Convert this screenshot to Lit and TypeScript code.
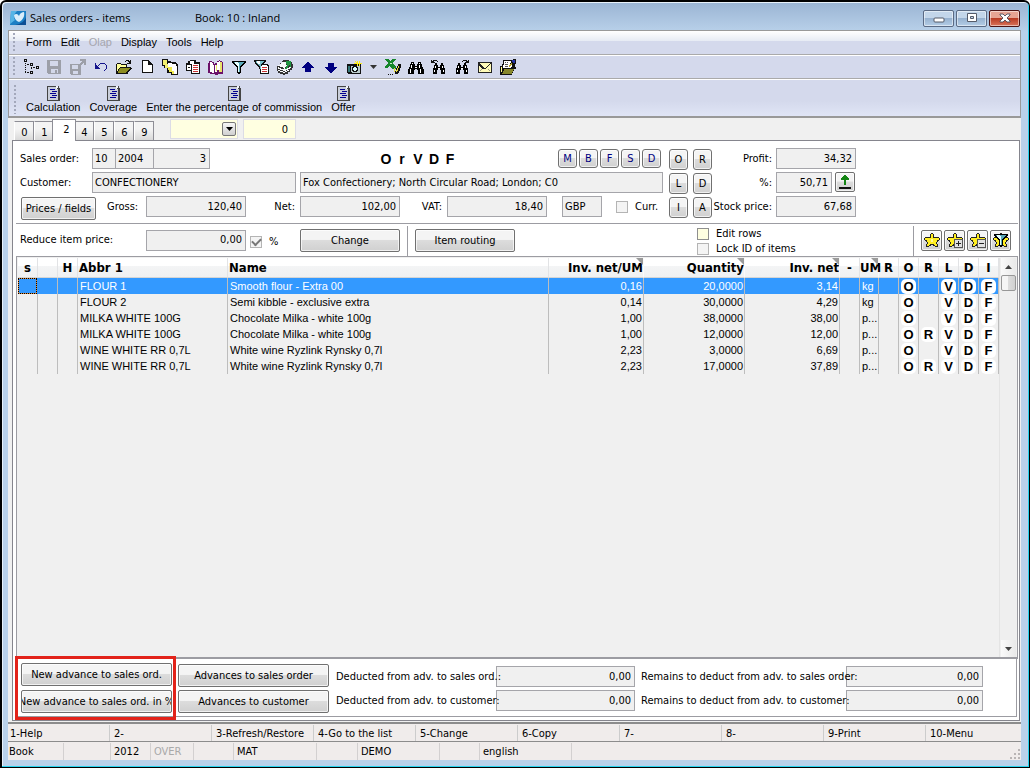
import { LitElement, html, css, svg, nothing } from "lit";
import { customElement, property, state } from "lit/decorators.js";
import { classMap } from "lit/directives/class-map.js";

/* 16x16 glyphs, drawn on whole pixels */
const BINOCULARS = svg`
  <path d="M3 3h3v2h-3zM10 3h3v2h-3zM2 5h5v2h2v-2h5v3h1v2h1v5h-6v-4h-1v-1h-2v1h-1v4h-6v-5h1v-2h1z" fill="#000"/>
  <path d="M4 4h1v1h-1zM11 4h1v1h-1zM3 6h1v3h-1zM11 6h1v3h-1zM2 10h1v4h-1zM12 10h1v4h-1zM7 8h2v1h-2z" fill="#fff"/>`;
const SMALL_BINOCULARS = svg`
  <path d="M4 4h2v2h-2zM10 4h2v2h-2zM3 6h4v2h2v-2h4v3h1v6h-4v-4h-1v-1h-2v1h-1v4h-4v-6h1z" fill="#000"/>
  <path d="M4 7h1v2h-1zM11 7h1v2h-1zM3 11h1v2h-1zM12 11h1v2h-1zM7 9h2v1h-2z" fill="#fff"/>`;
const STAR = svg`
  <path d="M7 1h2v1h1v3h5v1h1v2h-1v1h-1v1h-1v2h1v3h-3v-1h-2v-1h-2v1h-2v1h-3v-3h1v-2h-1v-1h-1v-1h-1v-2h1v-1h5v-3h1z" fill="#222"/>
  <path d="M7 2h2v4h6v2h-2v2h-1v2h1v2h-2v-1h-1v-1h-4v1h-1v1h-2v-2h1v-2h-1v-2h-2v-2h6z" fill="#ffee22"/>
  <path d="M7 7h2v3h-2z" fill="#fff799"/>`;
const FUNNEL = svg`
  <path d="M1 2h14v2h-1v1h-1v1h-1v1h-1v1h-1v6h-1v1h-2v-1h-1v-6h-1v-1h-1v-1h-1v-1h-1v-1h-1z" fill="#000"/>
  <path d="M3 3h10v1h-1v1h-1v1h-1v1h-1v6h-2v-6h-1v-1h-1v-1h-1v-1h-1z" fill="#5aa9b9"/>
  <path d="M4 3h3v1h1v9h-1v-6h-1v-1h-1v-1h-1z" fill="#e8ffff"/>`;

const GLYPHS: Record<string, unknown> = {
  tree: svg`<path fill-rule="evenodd" d="M0 0h3v3h-3zM1 1h1v1h-1zM6 4h3v3h-3zM7 5h1v1h-1zM12 7h3v3h-3zM13 8h1v1h-1zM6 12h3v3h-3zM7 13h1v1h-1zM1 4h1v1h-1zM1 6h1v1h-1zM1 8h1v1h-1zM1 10h1v1h-1zM1 12h1v2h-1zM3 13h2v1h-2zM3 5h2v1h-2zM7 8h1v2h-1zM9 8h2v1h-2z" fill="#111"/>`,
  save: svg`<path d="M0 1h14v14h-13v-1h-1z" fill="#9c9fa8"/><path d="M3 2h8v5h-8zM4 10h7v4h-7z" fill="#d3d8ea"/><path d="M8 11h2v3h-2z" fill="#9c9fa8"/>`,
  export: svg`<path d="M0 5h11v11h-10v-1h-1z" fill="#9c9fa8"/><path d="M2 6h6v4h-6zM3 12h5v3h-5z" fill="#d3d8ea"/><path d="M10 0h6v6h-2v-2h-1v1h-1v1h-1v1h-1v1h-2v-2h1v-1h1v-1h1v-1h1v-1h-2z" fill="#9c9fa8"/>`,
  undo: svg`<path d="M2 4h1v2h1v1h1v-1h1v-1h1v-1h5v1h1v1h1v4h-1v1h-1v1h-1v-1h1v-1h1v-4h-1v-1h-5v1h-1v1h-1v1h1v1h1v1h-5z" fill="#14148c"/>`,
  open: svg`<path d="M0 5h1v-1h4v1h6v3h4v1h1v1h-1v1h-1v1h-1v1h-1v2h-12z" fill="#111"/><path d="M1 5h4v1h5v2h-6v1h-1v1h-1v2h-1z" fill="#ffff99"/><path d="M4 9h10v1h-1v1h-1v1h-1v1h-1v1h-8v-2h1v-2h1z" fill="#8c8c20"/><path d="M9 2h1v-1h3v1h1v-1h1v4h-4v-1h2v-1h-1v-1h-2v1h-1z" fill="#111"/>`,
  page: svg`<path d="M3 1h7v1h1v1h1v1h1v1h1v9h-11z" fill="#111"/><path d="M4 2h5v4h4v7h-9z" fill="#fff"/>`,
  copies: svg`<path d="M0 0h6v2h3v1h5v1h1v1h1v11h-7v-2h-4v-5h-3v-2h-2z" fill="#111"/><path d="M1 1h4v5h-4zM3 5h4v4h-4z" fill="#f4f16e"/><path d="M6 4h4v6h-4zM10 5h4v2h1v8h-5z" fill="#fff"/><path d="M6 8h4v5h-3v-2h-1zM10 12h2v3h-2z" fill="#efe94c"/>`,
  locked: svg`<path d="M5 1h6v2h4v12h-9v-3h-5v-8h2v-2h2z" fill="#111"/><path d="M2 6h4v5h-4zM5 2h4v3h-4z" fill="#fff"/><path d="M7 5h7v9h-7z" fill="#fff"/><path d="M8 6h5v1h-5zM8 8h5v1h-5zM8 10h5v1h-5zM8 12h5v1h-5z" fill="#c33"/><path d="M3 8h2v1h-2z" fill="#111"/>`,
  book: svg`<path d="M0 4h1v-2h3v1h2v2h1v-1h2v-2h2v-1h1v1h2v1h1v12h-5v1h-3v-1h-5v-1h-2z" fill="#6b1168"/><path d="M2 3h2v1h1v2h1v8h-2v-1h-2z" fill="#fff"/><path d="M7 6h2v-3h2v-1h1v9h-3v2h-2z" fill="#fff"/><path d="M12 3h2v10h-3v-2h1zM8 6h1v6h-1z" fill="#e8e36a"/>`,
  filter: FUNNEL,
  filterDoc: svg`<path d="M0 1h12v2h-1v1h-1v1h4v1h1v9h-9v-5h-1v-2h-1v-1h-1v-1h-1v-1h-1v-2h-1z" fill="#111"/><path d="M2 2h8v1h-1v1h-1v1h-1v5h-1v-3h-1v-1h-1v-1h-1v-1h-1z" fill="#75bdca"/><path d="M3 2h3v3h-2v-1h-1z" fill="#fff"/><path d="M8 6h5v1h1v7h-7v-7h1z" fill="#fff"/><path d="M8 8h5v1h-5zM8 10h5v1h-5zM8 12h5v1h-5z" fill="#c33"/>`,
  books: svg`<path d="M6 1h6v1h2v1h1v2h1v4h-1v2h-2v2h-2v2h-3v1h-2v-1h-3v-1h-2v-2h-1v-5h1v-1h2v-2h2v-2h1z" fill="#333"/><path d="M5 3h4v3h1v2h-2v1h-2v-1h-3v-1h-2v-1h2v-1h1v-1h1zM1 8h1v1h2v1h3v-1h2v-1h1v1h2v-1h2v1h-1v1h-2v1h-2v1h-3v-1h-3v-1h-2zM1 11h2v1h3v1h2v-1h2v-1h2v1h-2v1h-2v1h-2v-1h-3v-1h-2z" fill="#f6f8fa"/><path d="M9 2h5v6h-1v-2h-1v1h-1v2h-1v1h-2v-1h1v-2h1v-2h-1z" fill="#1e9440"/>`,
  up: svg`<path d="M7 3h2v1h1v1h1v1h1v1h1v1h1v1h-3v4h-6v-4h-3v-1h1v-1h1v-1h1v-1h1v-1h1z" fill="#000080"/>`,
  down: svg`<path d="M5 4h6v4h3v1h-1v1h-1v1h-1v1h-1v1h-1v1h-2v-1h-1v-1h-1v-1h-1v-1h-1v-1h-1v-1h3z" fill="#000080"/>`,
  camera: svg`<path d="M1 5h14v10h-13v-1h-1z" fill="#111"/><path d="M2 7h2v6h-2z" fill="#377"/><path d="M5 7h9v7h-8v-1h-1z" fill="#bcc"/><path d="M7 7h4v1h1v4h-1v1h-4v-1h-1v-4h1z" fill="#111"/><path d="M8 8h2v1h1v2h-1v1h-2v-1h-1v-2h1z" fill="#dff"/><path d="M8 2h2v1h1v-1h1v2h1v-2h1v2h2v1h-2v2h-1v-2h-1v2h-1v-2h-3v-1h2v-1h-1z" fill="#ffee18"/>`,
  excel: svg`<path d="M0 0h4v1h1v1h1v-1h1v-1h4v1h-1v1h-1v1h-1v2h1v1h1v1h1v3h-4v-1h-1v-1h-1v-1h-1v1h-1v1h-3v-2h1v-1h1v-1h1v-2h-1v-1h-1v-1h-1z" fill="#15862b"/><path d="M5 4h2v1h-2z" fill="#c7e8c9"/><path d="M13 5h3v4h-1v3h-1v2h-1v1h-3v-3h1v-3h1v-2h1z" fill="#111"/><path d="M13 7h1v2h-1v3h-1v1h-1v-2h1v-2h1zM9 9h1v4h-1z" fill="#e4d93b"/><path d="M3 15h1v1h-1zM5 15h1v1h-1zM7 15h1v1h-1z" fill="#111"/>`,
  find: BINOCULARS,
  findPrev: svg`${SMALL_BINOCULARS}<path d="M0 1h1v1h1v-1h4v1h1v1h-1v-1h-3v1h1v1h-4z" fill="#111"/>`,
  findNext: svg`${SMALL_BINOCULARS}<path d="M9 1h4v1h1v-1h1v3h-4v-1h1v-1h-3v1h-1v-1h1z" fill="#111"/>`,
  mail: svg`<path d="M1 3h14v11h-14z" fill="#222"/><path d="M2 4h12v9h-12z" fill="#fffbb8"/><path d="M2 4h1v1h1v1h1v1h1v1h1v1h2v-1h1v-1h1v-1h1v-1h1v-1h1v1h-1v1h-1v1h-1v1h-1v1h-1v1h-4v-1h-1v-1h-1v-1h-1v-1h-1v-1h-1z" fill="#222"/><path d="M3 11h1v-1h1v1h-1v1h-1zM11 10h1v1h1v1h-1v-1h-1z" fill="#998"/>`,
  folder: svg`<path d="M3 1h10v-1h3v5h-1v3h1v2h-2v2h-1v2h-1v2h-12v-9h2v-2h1z" fill="#111"/><path d="M4 2h7v2h-1v1h2v3h-1v1h-8v-3h1z" fill="#fff"/><path d="M5 3h1v1h-1zM7 3h1v1h-1zM5 5h3v1h-3zM5 7h3v1h-3z" fill="#555"/><path d="M12 1h3v3h-2v-1h-1z" fill="#2734a3"/><path d="M10 5h1v-1h1v2h-1v1h-1v1h-1v-2h1z" fill="#b9a72a"/><path d="M4 10h10v1h-1v2h-1v2h-10v-1h1v-2h1z" fill="#87872b"/><path d="M1 8h1v5h-1z" fill="#ffff8b"/>`,
  form: svg`<path d="M2 1h12v2h1v13h-13z" fill="#444"/><path d="M3 2h8v2h2v11h-10z" fill="#c9ced9"/><path d="M11 1h2v2h-1v1h-1z" fill="#f2f4fa"/><path d="M5 4h5v1h-5zM7 6h5v1h-5zM5 8h6v1h-6zM7 10h5v1h-5zM5 12h6v1h-6z" fill="#000090"/>`,
  star: STAR,
  starAdd: svg`${STAR}<path d="M7 7h9v9h-9z" fill="#555"/><path d="M8 8h7v7h-7z" fill="#e2e2e2"/><path d="M11 9h1v2h2v1h-2v2h-1v-2h-2v-1h2z" fill="#222"/>`,
  starRemove: svg`${STAR}<path d="M7 7h9v9h-9z" fill="#555"/><path d="M8 8h7v7h-7z" fill="#e2e2e2"/><path d="M9 11h5v1h-5z" fill="#222"/>`,
  starFilter: svg`${STAR}${FUNNEL}`,
  raise: svg`<path d="M7 1h2v1h1v1h1v1h1v2h-3v5h-2v-5h-3v-2h1v-1h1v-1h1z" fill="#148514"/><path d="M2 13h12v2h-12z" fill="#111"/>`,
};

@customElement("px-icon")
class PxIcon extends LitElement {
  static styles = css`
    :host { display: block; width: 16px; height: 16px; }
    .art { display: block; }
  `;
  @property() name = "";
  render() {
    return html`<svg class="art" width="16" height="16" viewBox="0 0 16 16" shape-rendering="crispEdges" aria-hidden="true">${GLYPHS[this.name] ?? nothing}</svg>`;
  }
}

interface Item {
  abbr: string;
  name: string;
  unitNet: string;
  qty: string;
  net: string;
  um: string;
  flags: string[];
}

const ITEMS: Item[] = [
  { abbr: "FLOUR 1", name: "Smooth flour - Extra 00", unitNet: "0,16", qty: "20,0000", net: "3,14", um: "kg", flags: ["O", "", "V", "D", "F"] },
  { abbr: "FLOUR 2", name: "Semi kibble - exclusive extra", unitNet: "0,14", qty: "30,0000", net: "4,29", um: "kg", flags: ["O", "", "V", "D", "F"] },
  { abbr: "MILKA WHITE 100G", name: "Chocolate Milka - white 100g", unitNet: "1,00", qty: "38,0000", net: "38,00", um: "p...", flags: ["O", "", "V", "D", "F"] },
  { abbr: "MILKA WHITE 100G", name: "Chocolate Milka - white 100g", unitNet: "1,00", qty: "12,0000", net: "12,00", um: "p...", flags: ["O", "R", "V", "D", "F"] },
  { abbr: "WINE WHITE RR 0,7L", name: "White wine Ryzlink Rynsky 0,7l", unitNet: "2,23", qty: "3,0000", net: "6,69", um: "p...", flags: ["O", "", "V", "D", "F"] },
  { abbr: "WINE WHITE RR 0,7L", name: "White wine Ryzlink Rynsky 0,7l", unitNet: "2,23", qty: "17,0000", net: "37,89", um: "p...", flags: ["O", "R", "V", "D", "F"] },
];

@customElement("app-root")
class AppRoot extends LitElement {
  static styles = css`
    :host {
      display: block;
      --ui: "DejaVu Sans Condensed", Roboto, "Liberation Sans", sans-serif;
      --sys: "Liberation Sans", Arial, sans-serif;
      --face: #f0f0f0;
      --line: #9c9ca2;
      font: 11px/14px var(--ui);
      color: #000;
    }
    * { box-sizing: border-box; }
    button, input, select { font: inherit; color: inherit; margin: 0; padding: 0; border-radius: 0; }
    label { white-space: nowrap; }

    .window {
      display: flex;
      flex-direction: column;
      min-height: 100vh;
      padding: 0 8px 7px 6px;
      border: solid #000;
      border-width: 2px 1px 1px 2px;
      border-radius: 6px 6px 0 0;
      background: linear-gradient(#9ab4d3, #b9d1ea 30px);
      box-shadow: inset -1px -1px #27d3ee, inset 1px 1px #e8f1fa;
    }

    .titlebar { display: flex; align-items: center; height: 28px; padding: 4px 0 0 2px; font: 11px/16px "Open Sans", sans-serif; }
    .logo { display: block; margin-right: 4px; }
    .caption { width: 165px; white-space: nowrap; }
    .book { flex: 1; white-space: nowrap; }
    .winbtns { display: flex; gap: 2px; margin: 0 1px 0 0; }
    .winbtn {
      display: grid; place-items: center; width: 31px; height: 17px;
      border: 1px solid #5a6a84; border-radius: 2px;
      background: linear-gradient(#c3d6ea 45%, #97b2d0 50%, #b4cde6);
      box-shadow: inset 0 0 0 1px #ffffff80;
    }
    .close { border-color: #4d1414; background: linear-gradient(#e6a493 45%, #b93c24 50%, #d9745a); }

    .bars {
      border: 1px solid #999; border-bottom: 2px solid #999;
      background: linear-gradient(#fff, #e6ebf4 10px, #d4d9ec 10px, #d4d9ec 70px, #e0e5f6);
    }
    .bar { display: flex; align-items: center; border-bottom: 1px solid #aaa; box-shadow: 0 1px #fff; padding-left: 4px; }
    .bar:last-child { border-bottom: 0; box-shadow: none; }
    .grip { width: 3px; align-self: stretch; margin: 2px 4px 2px 0; background: radial-gradient(circle at 1px 1px, #a3a8bb 1px, transparent 1px) 0 0 / 3px 4px; }
    .menubar { height: 24px; font-family: var(--sys); }
    .menu { border: 0; background: none; padding: 3px 4px 5px 5px; }
    .menu:first-of-type { padding-left: 6px; }
    .menu.off { color: #a6a6ae; }
    .toolbar { height: 24px; }
    .tool { display: grid; place-items: center; width: 23px; height: 20px; border: 0; background: none; }
    .drop { width: 16px; }
    .formbar { height: 37px; font-family: var(--sys); padding: 4px 0 0 5px; }
    .formbtn { display: grid; justify-items: center; border: 0; background: none; padding: 0 4px 0 5px; line-height: 13px; }

    .client { flex: 1; display: flex; flex-direction: column; background: var(--face); padding: 1px 1px 0 4px; }
    .tabs { display: flex; align-items: flex-end; height: 21px; padding-left: 2px; }
    .tab {
      width: 20px; height: 19px; border: 1px solid #8e8e96; border-bottom: 0; border-left-color: #fff;
      background: linear-gradient(#f4f4f4 40%, #d9d9d9); padding: 3px 0 0 1px;
    }
    .tab.on { width: 24px; height: 22px; background: #fff; border-left-color: #8e8e96; padding: 0 0 1px 5px; margin: 0 -2px -1px; position: relative; }
    .combo { position: relative; width: 68px; height: 20px; margin: 0 5px 0 16px; align-self: flex-start; }
    .pick { width: 100%; height: 100%; appearance: none; border: 1px solid #dcdce6; background: #ffffe1; }
    .arrow { position: absolute; right: 2px; top: 3px; width: 14px; height: 14px; display: grid; place-items: center; border: 1px solid #777; border-radius: 2px; background: linear-gradient(#f6f6f6, #d0d0d0); pointer-events: none; }
    .yellow { width: 53px; height: 20px; align-self: flex-start; border: 1px solid #dcdce6; background: #ffffe1; text-align: right; padding: 0 7px; }

    .panel { flex: 1; display: flex; flex-direction: column; border: 1px solid #85858d; background: #fff; padding: 0 1px 3px 3px; }

    .field { height: 21px; border: 1px solid #a5a5aa; background: var(--face); padding: 0 1px 1px 2px; min-width: 0; }
    .num { text-align: right; padding-right: 3px; }
    .push {
      height: 23px; overflow: hidden; display: flex; align-items: center; justify-content: center; white-space: nowrap;
      border: 1px solid #707070; border-radius: 2px; padding-top: 1px;
      background: linear-gradient(#f4f4f4 45%, #dcdcdc 50%, #d0d0d0);
      box-shadow: inset 0 0 0 1px #ffffffb0;
    }
    .key { width: 19px; height: 21px; border-radius: 3px; }
    .blue { height: 19px; color: #000080; }
    .check {
      appearance: none; width: 12px; height: 12px; flex: none; border: 1px solid #b4b4b4; background: #f4f4f4;
      display: grid; place-items: center;
    }
    .check:checked::after { content: ""; width: 7px; height: 4px; border: solid #777; border-width: 0 0 2px 2px; rotate: -45deg; translate: 0 -1px; }
    .hot { background: #ffffe1; border-color: #8f8f8f; }

    .head { display: flex; align-items: flex-start; padding: 7px 162px 5px 0; border-bottom: 1px solid var(--line); }
    .main { flex: 1; min-width: 0; display: grid; gap: 3px; padding-left: 4px; }
    .line { display: flex; align-items: center; height: 21px; }
    .lead { width: 72px; }
    .joined { margin-left: -1px; }
    .w24 { width: 24px; }
    .w39 { width: 39px; }
    .w57 { width: 57px; }
    .w100 { width: 100px; }
    .w80 { width: 80px; }
    .w56 { width: 56px; }
    .w40 { width: 40px; }
    .w204 { width: 204px; }
    .grow { flex: 1; margin-left: 4px; }
    .marks { display: flex; margin-left: 168px; font: bold 14px/16px var(--sys); }
    .mark { width: 16px; text-align: center; }
    .blues { display: flex; gap: 2px; margin-left: auto; padding-right: 2px; }
    .prices { width: 75px; margin: 4px 11px 0 1px; }
    .gross { width: 39px; }
    .net { width: 54px; padding-right: 5px; text-align: right; }
    .vat { width: 47px; padding-right: 5px; text-align: right; }
    .cur { margin: 0 14px 0 15px; }
    .curlabel { padding: 0 3px 0 7px; }
    .keys { display: grid; grid-template-columns: 19px 19px; gap: 3px 5px; padding: 1px 0 0 6px; }
    .sums { display: grid; grid-template-columns: 64px 80px; gap: 3px 0; align-items: center; text-align: right; }
    .sums label { padding-right: 4px; }
    .withbtn { display: flex; gap: 3px; }
    .raise { width: 20px; height: 20px; padding: 0; }

    .tools { display: flex; align-items: center; height: 32px; padding-left: 4px; }
    .reduce { width: 126px; }
    .pct { margin: 3px 7px 0 4px; }
    .pctlabel { padding-top: 4px; width: 31px; }
    .rule { align-self: stretch; width: 1px; margin: 2px 7px 0; background: var(--line); }
    .opts { margin: 2px 0 0 auto; display: grid; gap: 1px; width: 209px; font: 11px/14px var(--ui); }
    .opt { display: flex; align-items: center; gap: 7px; }
    .stars { display: flex; gap: 2px; padding: 0 7px 0 0; }
    .starbtn { width: 21px; height: 21px; padding: 0; }

    .listbox { flex: 1; display: flex; min-height: 120px; border: 1px solid var(--line); border-bottom-width: 2px; background: var(--face); padding: 1px 1px 0; }
    .listwrap { flex: 1; min-width: 0; }
    .grid { width: 100%; border-collapse: separate; border-spacing: 0; table-layout: fixed; font: 11px/16px var(--sys); }
    .grid th {
      position: relative; height: 20px; padding: 0 1px; text-align: left; white-space: nowrap; overflow: hidden;
      font: bold 13px/18px var(--ui); background: linear-gradient(#fff 40%, #f3f4f5 45%, #f0f1f2); border-right: 1px solid #e2e3e5; border-bottom: 1px solid #d5d5d5;
    }
    .grid th.mid { text-align: center; padding: 0; }
    .grid th.end { text-align: right; padding: 0; }
    .grid th.um { padding: 0; overflow: visible; z-index: 1; }
    .grid th.end, .grid th.um { border-right-color: #fafafa; }
    .corner::after { content: ""; position: absolute; right: 0; top: 0; border: solid transparent; border-width: 0 7px 7px 0; border-right-color: #9a9a9a; }
    .grid td { height: 16px; padding: 0 2px; white-space: nowrap; overflow: hidden; border-right: 1px solid #bdbdbd; }
    .grid td.end { text-align: right; padding-right: 1px; }
    .grid td.mid { padding: 0; }
    .sel { background: #3399ff; color: #fff; }
    .grid td.focus { padding: 0; border-right-color: #3399ff; }
    .ring { display: block; height: 16px; border: 1px dotted #000; background: linear-gradient(#3399ff, #3399ff) padding-box, #e58a35; }
    .dot { display: block; width: 15px; height: 15px; margin: 0 auto; border-radius: 5px; background: #fff; color: #000; text-align: center; font: bold 13px/15px var(--sys); }
    .c20 { width: 20px; }
    .c19 { width: 19px; }
    .c150 { width: 150px; }
    .c95 { width: 95px; }
    .c101 { width: 101px; }
    .scroll { width: 17px; display: flex; flex-direction: column; align-items: center; background: #efefef; border-left: 1px solid #e4e4e4; }
    .arrowbtn { border: 0; background: linear-gradient(90deg, #fafafa, #e9e9e9); width: 15px; height: 17px; display: grid; place-items: center; }
    .thumb { width: 15px; height: 16px; border: 1px solid #979797; border-radius: 2px; background: linear-gradient(90deg, #f5f5f5 45%, #dcdcdc 50%, #d0d0d0); }
    .track { flex: 1; }

    .foot { display: flex; border: 1px solid var(--line); border-top: 0; margin-right: 1px; height: 58px; padding-top: 2px; }
    .framed { display: grid; gap: 4px; align-content: center; width: 161px; margin: -5px 2px -4px -2px; border: 3px solid #e2231a; padding-left: 3px; position: relative; }
    .stack { display: grid; gap: 3px; align-content: center; }
    .wide { width: 151px; }
    .totals { flex: 1; display: grid; grid-template-columns: 160px 139px 6px 205px 137px; gap: 3px 0; align-content: center; align-items: center; padding-left: 7px; }
    .over { position: relative; z-index: 1; }

    .keysbar { display: grid; grid-template-columns: repeat(9, 102fr) 95fr; border-top: 2px solid #8c8c8c; background: #f0eceb; height: 19px; margin: 1px -1px 0 -4px; padding-top: 1px; }
    .fkey { border: 0; border-right: 1px solid #ccc; background: none; text-align: left; padding: 1px 0 0 2px; white-space: nowrap; }
    .fkey + .fkey { padding-left: 4px; }
    .fkey:last-child { border-right: 0; }
    .status { display: grid; grid-template-columns: 56px 47px 40px 43px 40px 83px 41px 82px 40px 92px 1fr; align-items: stretch; border-top: 1px solid #8c8c8c; background: #f0eceb; height: 19px; margin: 0 -1px 0 -4px; padding-top: 1px; }
    .cell { border-right: 1px solid #d3d0d0; padding: 2px 0 0 3px; }
    .cell:first-child { padding-left: 1px; }
    .cell.off { color: #a9a9a9; }
    .cell:last-child { border: 0; display: flex; justify-content: flex-end; align-items: flex-end; }
  `;

  @state() private tab = "2";
  @state() private row = 0;

  private field(id: string, value: string, cls: string) {
    return html`<input class="field ${cls}" id=${id} .value=${value} readonly>`;
  }

  private tool(name: string) {
    return html`<button class="tool" aria-label=${name}><px-icon name=${name}></px-icon></button>`;
  }

  private renderBars() {
    return html`
      <div class="bars">
        <nav class="bar menubar"><span class="grip"></span>
          ${["Form", "Edit", "Olap", "Display", "Tools", "Help"].map(
            (m) => html`<button class=${classMap({ menu: true, off: m === "Olap" })}>${m}</button>`
          )}
        </nav>
        <div class="bar toolbar"><span class="grip"></span>
          ${["tree", "save", "export", "undo", "open", "page", "copies", "locked", "book", "filter", "filterDoc", "books", "up", "down", "camera"].map((n) => this.tool(n))}
          <button class="tool drop" aria-label="more"><svg width="7" height="4" viewBox="0 0 7 4"><path d="M0 0h7l-3.500 4z" fill="#333"/></svg></button>
          ${["excel", "find", "findPrev", "findNext", "mail", "folder"].map((n) => this.tool(n))}
        </div>
        <div class="bar formbar"><span class="grip"></span>
          ${["Calculation", "Coverage", "Enter the percentage of commission", "Offer"].map(
            (n) => html`<button class="formbtn"><px-icon name="form"></px-icon>${n}</button>`
          )}
        </div>
      </div>`;
  }

  private renderHead() {
    return html`
      <div class="head">
        <div class="main">
          <div class="line">
            <label class="lead" for="so-book">Sales order:</label>
            ${this.field("so-book", "10", "w24")}${this.field("so-year", "2004", "w39 joined")}${this.field("so-no", "3", "w57 joined num")}
            <div class="marks">${["O", "r", "V", "D", "F"].map((m) => html`<span class="mark">${m}</span>`)}</div>
            <div class="blues">${["M", "B", "F", "S", "D"].map((m) => html`<button class="push key blue">${m}</button>`)}</div>
          </div>
          <div class="line">
            <label class="lead" for="cust">Customer:</label>
            ${this.field("cust", "CONFECTIONERY", "w204")}${this.field("addr", "Fox Confectionery; North Circular Road; London; C0", "grow")}
          </div>
          <div class="line">
            <button class="push prices">Prices / fields</button>
            <label class="gross" for="gross">Gross:</label>${this.field("gross", "120,40", "w100 num")}
            <label class="net" for="net">Net:</label>${this.field("net", "102,00", "w100 num")}
            <label class="vat" for="vat">VAT:</label>${this.field("vat", "18,40", "w100 num")}
            ${this.field("cur", "GBP", "w40 cur")}
            <input class="check" type="checkbox" id="curr"><label class="curlabel" for="curr">Curr.</label>
          </div>
        </div>
        <div class="keys">${["O", "R", "L", "D", "I", "A"].map((k) => html`<button class="push key">${k}</button>`)}</div>
        <div class="sums">
          <label for="profit">Profit:</label>${this.field("profit", "34,32", "num w80")}
          <label for="margin">%:</label>
          <div class="withbtn">${this.field("margin", "50,71", "num w56")}<button class="push raise" aria-label="raise"><px-icon name="raise"></px-icon></button></div>
          <label for="stock">Stock price:</label>${this.field("stock", "67,68", "num w80")}
        </div>
      </div>
      <div class="tools">
        <label class="reduce" for="reduce">Reduce item price:</label>
        ${this.field("reduce", "0,00", "w100 num")}
        <input class="check pct" type="checkbox" id="pct" checked><label class="pctlabel" for="pct">%</label>
        <button class="push w100">Change</button>
        <span class="rule"></span>
        <button class="push w100">Item routing</button>
        <div class="opts">
          <label class="opt"><input class="check hot" type="checkbox">Edit rows</label>
          <label class="opt"><input class="check" type="checkbox">Lock ID of items</label>
        </div>
        <span class="rule"></span>
        <div class="stars">${["star", "starAdd", "starRemove", "starFilter"].map(
          (n) => html`<button class="push starbtn" aria-label=${n}><px-icon name=${n}></px-icon></button>`
        )}</div>
      </div>`;
  }

  private renderList() {
    const cols = ["c20", "c20", "c20", "c150", "", "c95", "c101", "c95", "c20", "c19", "c20", "c20", "c20", "c20", "c20", "c20"];
    return html`
      <div class="listbox">
        <div class="listwrap">
          <table class="grid">
            <colgroup>${cols.map((c) => html`<col class=${c}>`)}</colgroup>
            <thead><tr>
              <th class="mid">s</th><th></th><th class="mid">H</th><th>Abbr 1</th><th>Name</th>
              <th class="end corner">Inv. net/UM</th><th class="end corner">Quantity</th><th class="end corner">Inv. net</th>
              <th class="mid">-</th><th class="um corner">UM</th>
              ${["R", "O", "R", "L", "D", "I"].map((h) => html`<th class="mid">${h}</th>`)}
            </tr></thead>
            <tbody>${ITEMS.map((it, i) => html`
              <tr class=${classMap({ sel: i === this.row })} @click=${() => (this.row = i)}>
                <td class=${classMap({ focus: i === this.row })}>${i === this.row ? html`<span class="ring"></span>` : nothing}</td><td></td><td></td>
                <td>${it.abbr}</td><td>${it.name}</td>
                <td class="end">${it.unitNet}</td><td class="end">${it.qty}</td><td class="end">${it.net}</td>
                <td></td><td>${it.um}</td><td></td>
                ${it.flags.map((f) => html`<td class="mid">${f ? html`<span class="dot">${f}</span>` : nothing}</td>`)}
              </tr>`)}
            </tbody>
          </table>
        </div>
        <div class="scroll">
          <button class="arrowbtn" aria-label="scroll up"><svg width="7" height="4" viewBox="0 0 7 4"><path d="M0 4h7l-3.500-4z" fill="#444"/></svg></button>
          <div class="thumb"></div>
          <div class="track"></div>
          <button class="arrowbtn" aria-label="scroll down"><svg width="7" height="4" viewBox="0 0 7 4"><path d="M0 0h7l-3.500 4z" fill="#444"/></svg></button>
        </div>
      </div>`;
  }

  private renderFoot() {
    return html`
      <div class="foot">
        <div class="framed">
          <button class="push wide">New advance to sales ord.</button>
          <button class="push wide">New advance to sales ord. in %</button>
        </div>
        <div class="stack">
          <button class="push wide">Advances to sales order</button>
          <button class="push wide">Advances to customer</button>
        </div>
        <div class="totals">
          <label class="over" for="d1">Deducted from adv. to sales ord.:</label>${this.field("d1", "0,00", "num")}<span></span>
          <label class="over" for="r1">Remains to deduct from adv. to sales order:</label>${this.field("r1", "0,00", "num")}
          <label class="over" for="d2">Deducted from adv. to customer:</label>${this.field("d2", "0,00", "num")}<span></span>
          <label class="over" for="r2">Remains to deduct from adv. to customer:</label>${this.field("r2", "0,00", "num")}
        </div>
      </div>`;
  }

  render() {
    return html`
      <div class="window">
        <header class="titlebar">
          <svg class="logo" width="16" height="16" viewBox="0 0 16 16" aria-hidden="true">
            <path d="M1 1h15v14h-16z" fill="#1c7fc4"/><path d="M1 1h6c-3 3-4 6-2 9l-5 4z" fill="#55b4e6"/><path d="M16 7v8h-11c6-1 10-4 11-8z" fill="#0c4f94"/>
            <path d="M4 5c2-2 4-1 5 1c1-3 3-4 5-4c1 4-1 8-5 10c-3-1-5-4-5-7z" fill="#d9eefb"/>
          </svg>
          <span class="caption">Sales orders - items</span>
          <span class="book">Book: 10 : Inland</span>
          <div class="winbtns">
            <button class="winbtn" aria-label="Minimize"><svg width="12" height="12" viewBox="0 0 12 12"><rect x="1" y="6" width="10" height="4" rx="1" fill="#fff" stroke="#555b69"/></svg></button>
            <button class="winbtn" aria-label="Maximize"><svg width="12" height="12" viewBox="0 0 12 12"><path fill-rule="evenodd" d="M1.500 1.500h9v8h-9zM4.500 4.500v2h3v-2z" fill="#fff" stroke="#555b69"/></svg></button>
            <button class="winbtn close" aria-label="Close"><svg width="12" height="12" viewBox="0 0 12 12"><path d="M1 2h3l2 2l2-2h3v1l-3 3l3 3v1h-3l-2-2l-2 2h-3v-1l3-3l-3-3z" fill="#fff" stroke="#4f4b57" stroke-width="0.900"/></svg></button>
          </div>
        </header>
        ${this.renderBars()}
        <main class="client">
          <div class="tabs" role="tablist">
            ${["0", "1", "2", "4", "5", "6", "9"].map(
              (t) => html`<button role="tab" class=${classMap({ tab: true, on: t === this.tab })} @click=${() => (this.tab = t)}>${t}</button>`
            )}
            <div class="combo">
              <select class="pick" aria-label="View"><option></option></select>
              <span class="arrow"><svg width="7" height="4" viewBox="0 0 7 4"><path d="M0 0h7l-3.500 4z" fill="#000"/></svg></span>
            </div>
            <input class="yellow" aria-label="Count" .value=${"0"}>
          </div>
          <section class="panel">
            ${this.renderHead()}${this.renderList()}${this.renderFoot()}
          </section>
          <div class="keysbar">
            ${["1-Help", "2-", "3-Refresh/Restore", "4-Go to the list", "5-Change", "6-Copy", "7-", "8-", "9-Print", "10-Menu"].map(
              (k) => html`<button class="fkey">${k}</button>`
            )}
          </div>
          <div class="status">
            ${["Book", "", "2012", "OVER", "", "MAT", "", "DEMO", "", "english"].map(
              (c) => html`<span class=${classMap({ cell: true, off: c === "OVER" })}>${c}</span>`
            )}
            <span class="cell"><svg width="12" height="12" viewBox="0 0 12 12" aria-hidden="true"><path d="M9 1h2v2h-2zM5 5h2v2h-2zM9 5h2v2h-2zM1 9h2v2h-2zM5 9h2v2h-2zM9 9h2v2h-2z" fill="#b9b5b5"/></svg></span>
          </div>
        </main>
      </div>`;
  }
}
